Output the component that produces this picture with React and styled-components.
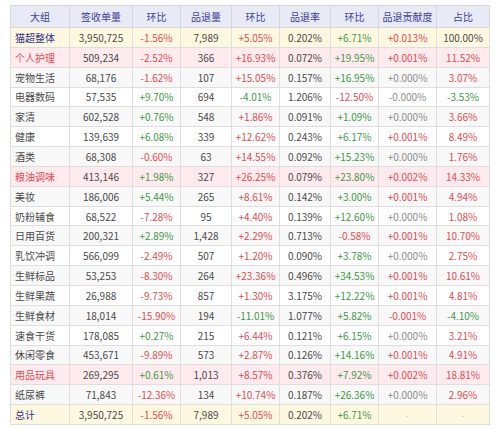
import React from "react";
import styled, { createGlobalStyle, css } from "styled-components";

const Global = createGlobalStyle`
  html, body { margin: 0; padding: 0; background: #fff; }
  body { font-family: "Noto Sans CJK SC", "Noto Sans", sans-serif; }
`;

const Wrap = styled.div`
  padding: 5px 0 0 10px;
`;

const Table = styled.table`
  border-collapse: collapse;
  table-layout: fixed;
  width: 479px;
  font-size: 10px;
  border: 1px solid #d8d8d8;
`;

const HeadCell = styled.th`
  height: 21px;
  padding: 0;
  background: #e8eaf6;
  color: #3d4296;
  font-weight: 400;
  border: 1px solid #d8d8d8;
  text-align: center;
`;

const bgMap = {
  total: "#fff8e1",
  hl: "#ffebee",
  odd: "#f8f8f8",
  even: "#ffffff",
};

const Row = styled.tr`
  background: ${(p) => bgMap[p.$kind]};
`;

const toneMap = {
  red: "#dc4d53",
  green: "#42984a",
  gray: "#8c8c8c",
  dark: "#4a4a4a",
  navy: "#30338c",
};

const Cell = styled.td`
  height: 18.85px;
  padding: 0;
  border: 1px solid #dedede;
  text-align: center;
  color: ${(p) => toneMap[p.$tone || "dark"]};
  white-space: nowrap;
  ${(p) =>
    p.$name &&
    css`
      text-align: left;
      padding-left: 4px;
    `}
`;

const headers = ["大组", "签收单量", "环比", "品退量", "环比", "品退率", "环比", "品退贡献度", "占比"];
const widths = [59, 63, 48, 51, 48, 51, 48, 58, 53];

const rows = [
  ["猫超整体", "3,950,725", "-1.56%", "7,989", "+5.05%", "0.202%", "+6.71%", "+0.013%", "100.00%", "total"],
  ["个人护理", "509,234", "-2.52%", "366", "+16.93%", "0.072%", "+19.95%", "+0.001%", "11.52%", "hl"],
  ["宠物生活", "68,176", "-1.62%", "107", "+15.05%", "0.157%", "+16.95%", "+0.000%", "3.07%"],
  ["电器数码", "57,535", "+9.70%", "694", "-4.01%", "1.206%", "-12.50%", "-0.000%", "-3.53%"],
  ["家清", "602,528", "+0.76%", "548", "+1.86%", "0.091%", "+1.09%", "+0.000%", "3.66%"],
  ["健康", "139,639", "+6.08%", "339", "+12.62%", "0.243%", "+6.17%", "+0.001%", "8.49%"],
  ["酒类", "68,308", "-0.60%", "63", "+14.55%", "0.092%", "+15.23%", "+0.000%", "1.76%"],
  ["粮油调味", "413,146", "+1.98%", "327", "+26.25%", "0.079%", "+23.80%", "+0.002%", "14.33%", "hl"],
  ["美妆", "186,006", "+5.44%", "265", "+8.61%", "0.142%", "+3.00%", "+0.001%", "4.94%"],
  ["奶粉辅食", "68,522", "-7.28%", "95", "+4.40%", "0.139%", "+12.60%", "+0.000%", "1.08%"],
  ["日用百货", "200,321", "+2.89%", "1,428", "+2.29%", "0.713%", "-0.58%", "+0.001%", "10.70%"],
  ["乳饮冲调", "566,099", "-2.49%", "507", "+1.20%", "0.090%", "+3.78%", "+0.000%", "2.75%"],
  ["生鲜标品", "53,253", "-8.30%", "264", "+23.36%", "0.496%", "+34.53%", "+0.001%", "10.61%"],
  ["生鲜果蔬", "26,988", "-9.73%", "857", "+1.30%", "3.175%", "+12.22%", "+0.001%", "4.81%"],
  ["生鲜食材", "18,014", "-15.90%", "194", "-11.01%", "1.077%", "+5.82%", "-0.001%", "-4.10%"],
  ["速食干货", "178,085", "+0.27%", "215", "+6.44%", "0.121%", "+6.15%", "+0.000%", "3.21%"],
  ["休闲零食", "453,671", "-9.89%", "573", "+2.87%", "0.126%", "+14.16%", "+0.001%", "4.91%"],
  ["用品玩具", "269,295", "+0.61%", "1,013", "+8.57%", "0.376%", "+7.92%", "+0.002%", "18.81%", "hl"],
  ["纸尿裤", "71,843", "-12.36%", "134", "+10.74%", "0.187%", "+26.36%", "+0.000%", "2.96%"],
  ["总计", "3,950,725", "-1.56%", "7,989", "+5.05%", "0.202%", "+6.71%", "-", "-", "total"],
];

const signTone = (v) => (v.startsWith("-") ? "green" : "red");
const changeTone = (v) => (v.startsWith("-") ? "red" : "green");

function toneFor(col, v, kind, rowIdx) {
  if (col === 0) {
    if (kind === "total") return "navy";
    if (kind === "hl") return "red";
    return "dark";
  }
  if (col === 1 || col === 3 || col === 5) return "dark";
  if (col === 2 || col === 6) return changeTone(v);
  if (col === 4) return signTone(v);
  if (col === 7) {
    if (v === "-") return "gray";
    if (v.includes("0.000")) return "gray";
    return "red";
  }
  if (col === 8) {
    if (v === "-") return "gray";
    if (rowIdx === 0) return "dark";
    return v.startsWith("-") ? "green" : "red";
  }
  return "dark";
}

const Dash = styled.span`
  color: #bbb;
  font-size: 8px;
`;

export default function App() {
  return (
    <>
      <Global />
      <Wrap>
        <Table>
          <colgroup>
            {widths.map((w, i) => (
              <col key={i} style={{ width: w }} />
            ))}
          </colgroup>
          <thead>
            <tr>
              {headers.map((h, i) => (
                <HeadCell key={i}>{h}</HeadCell>
              ))}
            </tr>
          </thead>
          <tbody>
            {rows.map((r, ri) => {
              const kind = r[9] || (ri % 2 === 0 ? "odd" : "even");
              return (
                <Row key={ri} $kind={kind}>
                  {r.slice(0, 9).map((v, ci) => (
                    <Cell key={ci} $name={ci === 0} $tone={toneFor(ci, v, kind, ri)}>
                      {v === "-" ? <Dash>-</Dash> : v}
                    </Cell>
                  ))}
                </Row>
              );
            })}
          </tbody>
        </Table>
      </Wrap>
    </>
  );
}
